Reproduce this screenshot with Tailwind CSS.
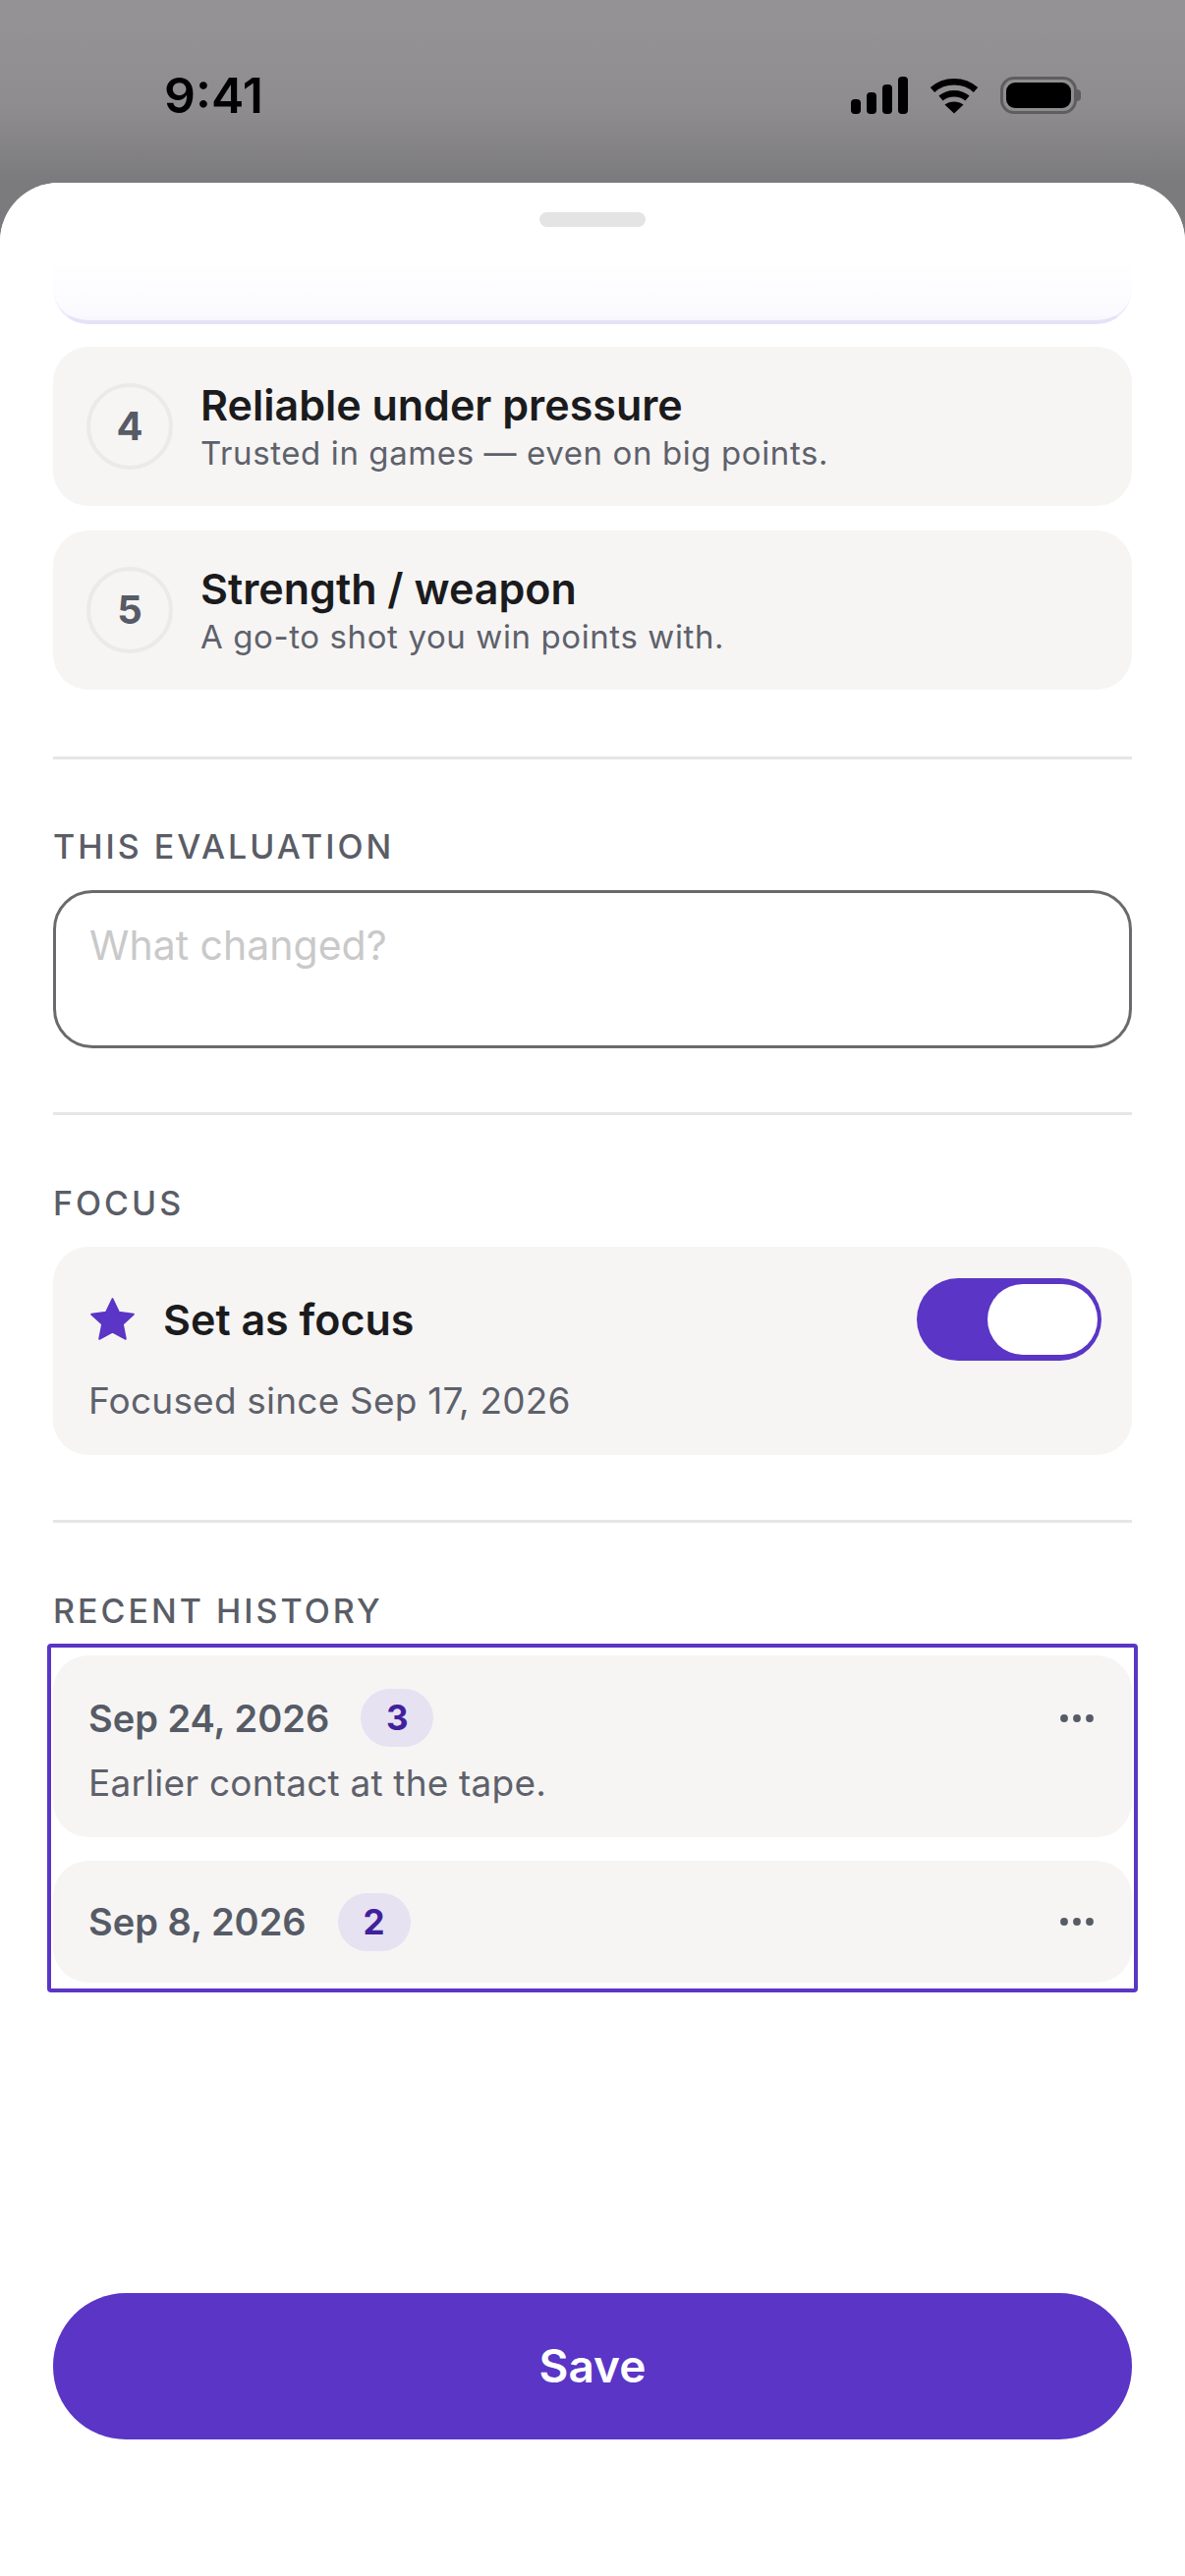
<!doctype html>
<html lang="en">
<head>
<meta charset="utf-8">
<title>Evaluation</title>
<script src="https://cdn.jsdelivr.net/npm/@tailwindcss/browser@4"></script>
</head>
<body class="font-['Inter',sans-serif]">
<div class="w-[1206px] h-[2622px] flex flex-col overflow-hidden bg-white">

  <!-- Status bar; it runs on behind the sheet's rounded corners -->
  <header class="h-[246px] -mb-[60px] shrink-0 flex items-start justify-between pt-[72px] pl-[167px] pr-[106px] text-black bg-gradient-to-b from-[#949295] from-10% via-[#8e8c8f] via-45% to-[#7b7a7c] to-75%">
    <span class="text-[50px] leading-[50px] font-semibold">9:41</span>
    <div class="flex items-center gap-[22px] pt-[6px]">
      <svg class="w-[58px] h-[38px]" viewBox="0 0 58 38" fill="#000">
        <rect x="0" y="23" width="10" height="15" rx="4"/>
        <rect x="16" y="16" width="10" height="22" rx="4"/>
        <rect x="32" y="8" width="10" height="30" rx="4"/>
        <rect x="48" y="0" width="10" height="38" rx="4"/>
      </svg>
      <svg class="w-[50px] h-[38px]" viewBox="0 0 50 38" fill="none" stroke="#000" stroke-width="6.5">
        <path d="M3 13.5C15 2.5 35 2.5 47 13.5"/>
        <path d="M11.5 22C19 15.5 31 15.5 38.5 22"/>
        <path d="M25 37.5L15.5 28.5C21 24.5 29 24.5 34.5 28.5Z" fill="#000" stroke="none"/>
      </svg>
      <div class="flex items-center">
        <div class="w-[78px] h-[38px] rounded-[14px] border-[3px] border-[#5e5d60] p-[3px]">
          <div class="w-full h-full rounded-[9px] bg-black"></div>
        </div>
        <div class="w-[4px] h-[12px] rounded-r-[4px] bg-[#5e5d60]"></div>
      </div>
    </div>
  </header>

  <!-- Bottom sheet -->
  <main class="flex-1 bg-white rounded-t-[60px] flex flex-col relative overflow-hidden">
    <div class="h-[144px] shrink-0 overflow-hidden relative flex flex-col justify-end px-[54px]">
      <div class="h-[120px] shrink-0 rounded-b-[36px] bg-[#f9f7fe] border-b-[4px] border-[#e6e2f6]"></div>
      <div class="absolute inset-x-0 top-0 h-[136px] bg-gradient-to-b from-white from-60% to-white/30"></div>
      <div class="absolute top-[30px] left-[549px] w-[108px] h-[15px] rounded-full bg-[#e4e4e4]"></div>
    </div>

    <div class="flex flex-col px-[54px] pt-[23px]">
      <!-- Remaining rating options -->
      <section class="flex flex-col gap-[25px]">
        <div class="h-[162px] rounded-[36px] bg-[#f6f5f4] flex items-center pl-[34px] gap-[28px]">
          <div class="w-[88px] h-[88px] rounded-full border-[4px] border-[#ebeae8] flex items-center justify-center text-[40px] font-bold text-[#565b66]">4</div>
          <div class="flex flex-col">
            <span class="text-[43px] leading-[50px] font-semibold text-[#1b1b1d]">Reliable under pressure</span>
            <span class="mt-[3px] text-[33px] leading-[42px] tracking-[0.6px] text-[#5e616b]">Trusted in games — even on big points.</span>
          </div>
        </div>
        <div class="h-[162px] rounded-[36px] bg-[#f6f5f4] flex items-center pl-[34px] gap-[28px]">
          <div class="w-[88px] h-[88px] rounded-full border-[4px] border-[#ebeae8] flex items-center justify-center text-[40px] font-bold text-[#565b66]">5</div>
          <div class="flex flex-col">
            <span class="text-[43px] leading-[50px] font-semibold text-[#1b1b1d]">Strength / weapon</span>
            <span class="mt-[3px] text-[33px] leading-[42px] tracking-[0.6px] text-[#5e616b]">A go-to shot you win points with.</span>
          </div>
        </div>
      </section>

      <hr class="mt-[68px] border-t-[3px] border-[#e6e6e6]">

      <!-- Notes for this evaluation -->
      <h2 class="mt-[69px] text-[34px] leading-[40px] font-medium tracking-[3px] text-[#5a5d66]">THIS EVALUATION</h2>
      <div class="mt-[24px] h-[161px] rounded-[40px] border-[3px] border-[#6a6a6e] px-[34px] pt-[30px] text-[41px] leading-[46px] text-[#c9c9c9]">What changed?</div>

      <hr class="mt-[65px] border-t-[3px] border-[#e6e6e6]">

      <!-- Focus toggle -->
      <h2 class="mt-[70px] text-[34px] leading-[40px] font-medium tracking-[3px] text-[#5a5d66]">FOCUS</h2>
      <div class="mt-[24px] h-[212px] rounded-[36px] bg-[#f6f5f4] pl-[37px] pr-[31px] pt-[32px]">
        <div class="flex items-center justify-between">
          <div class="flex items-center gap-[28px]">
            <svg class="w-[47px] h-[46px]" viewBox="0 0 24 23" fill="#5b35c5">
              <path d="M12 0.8l3.3 7 7.6 1-5.6 5.2 1.5 7.6L12 17.9l-6.8 3.7 1.5-7.6L1.1 8.8l7.6-1z" stroke="#5b35c5" stroke-width="1" stroke-linejoin="round"/>
            </svg>
            <span class="text-[43px] leading-[50px] font-semibold text-[#1b1b1d]">Set as focus</span>
          </div>
          <div class="w-[188px] h-[84px] rounded-full bg-[#5b35c5] flex items-center justify-end pr-[4px]">
            <div class="w-[112px] h-[72px] rounded-full bg-white"></div>
          </div>
        </div>
        <p class="-ml-px mt-[19px] text-[37px] leading-[44px] tracking-[0.2px] text-[#5e616b]">Focused since Sep 17, 2026</p>
      </div>

      <hr class="mt-[66px] border-t-[3px] border-[#e6e6e6]">

      <!-- History entries -->
      <h2 class="mt-[70px] text-[34px] leading-[40px] font-medium tracking-[3px] text-[#5a5d66]">RECENT HISTORY</h2>
      <div class="mt-[13px] -mx-[6px] border-[4px] border-[#5b35c5] rounded-[4px] px-[2px] pt-[8px] pb-[6px] flex flex-col gap-[24px]">
        <article class="h-[185px] rounded-[36px] bg-[#f6f5f4] pl-[36px] pr-[38px] pt-[34px]">
          <div class="flex items-center justify-between">
            <div class="flex items-center gap-[32px]">
              <span class="text-[38px] leading-[46px] font-semibold text-[#565b66]">Sep 24, 2026</span>
              <span class="w-[74px] h-[59px] rounded-full bg-[#e6e2f2] flex items-center justify-center text-[35px] font-bold text-[#41219b]">3</span>
            </div>
            <svg class="w-[36px] h-[10px]" viewBox="0 0 36 10" fill="#565b66"><circle cx="5" cy="5" r="3.9"/><circle cx="18" cy="5" r="3.9"/><circle cx="31" cy="5" r="3.9"/></svg>
          </div>
          <p class="mt-[15px] text-[37px] leading-[44px] tracking-[0.2px] text-[#5e616b]">Earlier contact at the tape.</p>
        </article>
        <article class="h-[124px] rounded-[36px] bg-[#f6f5f4] pl-[36px] pr-[38px] flex items-center justify-between">
          <div class="flex items-center gap-[32px]">
            <span class="text-[38px] leading-[46px] font-semibold text-[#565b66]">Sep 8, 2026</span>
            <span class="w-[74px] h-[59px] rounded-full bg-[#e6e2f2] flex items-center justify-center text-[35px] font-bold text-[#41219b]">2</span>
          </div>
          <svg class="w-[36px] h-[10px]" viewBox="0 0 36 10" fill="#565b66"><circle cx="5" cy="5" r="3.9"/><circle cx="18" cy="5" r="3.9"/><circle cx="31" cy="5" r="3.9"/></svg>
        </article>
      </div>

      <button class="mt-[306px] h-[149px] rounded-[74px] bg-[#5a35c6] text-white text-[46px] font-semibold">Save</button>
    </div>
  </main>
</div>
</body>
</html>
